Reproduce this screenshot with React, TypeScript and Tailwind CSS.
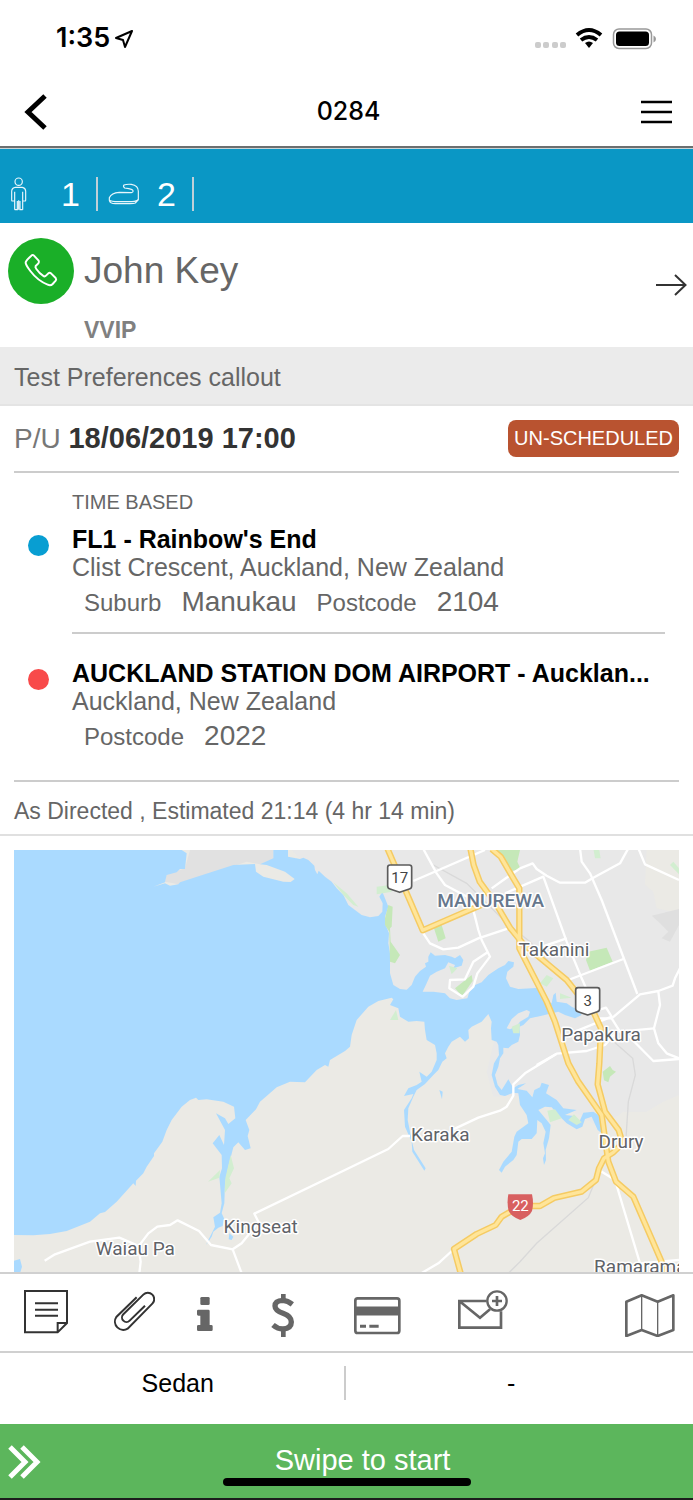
import type { ReactNode } from "react";

const placeLabels = [
  { name: "Takanini", x: 1662, y: 333 },
  { name: "Papakura", x: 1803, y: 588 },
  { name: "Karaka", x: 1321, y: 887 },
  { name: "Drury", x: 1863, y: 908 },
  { name: "Kingseat", x: 782, y: 1165 },
  { name: "Waiau Pa", x: 406, y: 1230 },
  { name: "Ramarama", x: 1921, y: 1285 },
];

const highways = [
  // route 17
  "M1162 10 L1268 256 L1455 175",
  // great south road
  "M1411 10 L1421 60 L1439 110 L1490 180 L1530 248 L1568 295 L1640 355 L1700 405 L1740 455 L1780 500 L1803 550 L1798 655 L1793 718 L1815 800 L1856 855 L1868 895 L1840 922 L1812 940 L1797 970 L1788 1005 L1745 1040 L1662 1059 L1620 1083 L1560 1083 L1505 1115 L1487 1140 L1430 1167 L1362 1212 L1382 1285",
  // southern motorway
  "M1475 12 L1502 35 L1540 100 L1558 130 L1558 310 L1640 470 L1665 530 L1705 655 L1735 710 L1805 810 L1815 880 L1825 950 L1848 1010 L1900 1055 L2000 1285",
];

const minorRoads = [
  "M1270 12 L1310 85 L1335 120 L1410 160 L1425 215 L1435 255 L1445 285 L1470 335 L1432 385 L1420 425 L1388 455 L1348 430 L1350 405 L1395 403 L1420 350 L1465 320",
  "M1240 108 L1455 15",
  "M1475 130 L1510 105 L1560 70 L1598 55 L1610 72 L1640 92 L1680 113 L1755 113 L1780 98 L1860 55 L1885 10",
  "M1740 10 L1745 50 L1770 85 L1805 165 L1912 447",
  "M1915 10 L1935 58 L2037 105",
  "M1515 145 L1630 95 L1700 290 L1745 400 L1785 490",
  "M1268 262 L1290 295 L1330 313 L1375 308 L1435 280 L1525 250",
  "M1565 325 L1700 280",
  "M1705 405 L1870 342",
  "M1795 520 L1835 520 L1920 448 L1975 438 L2018 422 L2025 400 L2040 370",
  "M1975 440 L1980 480 L1962 550 L1975 595 L2000 625 L2037 640",
  "M1835 520 L1860 560 L1962 550",
  "M1610 660 L1670 626 L1760 618 L1815 600 L1850 560",
  "M1725 560 L1835 515 L1818 488 L1780 500",
  "M1868 555 L1960 648 L2037 642",
  "M1670 626 L1640 645 L1575 685 L1540 718 L1540 752 L1520 785 L1500 797 L1435 818 L1360 853 M1230 873 L1208 873 L1165 912 L1035 975 L763 1106 L775 1130 L745 1170 L725 1195 L698 1213 L633 1200 L597 1158 L533 1126 L510 1140 L472 1145 L445 1165 L415 1205 L422 1250 L418 1285",
  "M134 1247 L165 1228 L270 1190 L358 1178 L410 1200",
  "M698 1213 L725 1285",
  "M1362 1212 L1315 1255 L1255 1290",
  "M1797 975 L1845 1005 L1920 1255 L2037 1245",
];

const parks = [
  "M1475 15 L1560 15 L1552 50 L1562 72 L1535 78 Z",
  "M1165 180 L1178 185 L1175 245 L1170 250 L1172 290 L1200 330 L1185 355 L1170 350 L1168 260 L1155 240 L1155 220 Z",
  "M1302 250 L1325 240 L1337 280 L1315 290 Z",
  "M1365 430 L1415 390 L1418 408 L1392 445 L1385 452 Z",
  "M1765 320 L1820 308 L1838 350 L1770 377 L1758 345 Z",
  "M1808 680 L1830 663 L1838 675 L1848 680 L1830 695 L1825 712 L1812 706 Z",
];

const paleParks = [
  "M1000 112 L1040 145 L1075 185 L1060 180 L1030 150 Z",
  "M1130 125 L1170 120 L1175 140 L1130 148 Z",
  "M1188 495 L1195 525 L1170 525 Z",
  "M1620 415 L1640 390 L1660 400 L1640 425 Z",
  "M1680 445 L1715 458 L1680 462 Z",
  "M1347 362 L1372 370 L1355 388 Z",
  "M1535 545 L1560 535 L1558 565 L1540 565 Z",
  "M1780 10 L1797 10 L1802 40 L1785 40 Z",
  "M2010 60 L2020 50 L2037 70 L2037 88 Z",
  "M1642 797 L1665 793 L1685 820 L1650 832 Z",
  "M1705 825 L1722 808 L1745 832 L1730 840 Z",
  "M692 930 L702 970 L688 1000 L695 1015 L674 1045 L676 1000 Z",
  "M624 1010 L660 975 L658 998 Z",
];

const waterPath =
  "M42 15 L545 15 L560 25 L555 72 L540 72 L530 82 L500 90 L495 112 L460 125 L495 115 L510 122 L535 118 L540 112 L700 60 L765 57 L768 80 L790 95 L850 110 L872 111 L884 102 L855 80 L800 60 L780 58 L820 40 L820 15 " +
  "L864 15 L864 35 L900 42 L910 38 L925 45 L943 62 L945 75 L952 88 L956 77 L975 95 L995 110 L1010 130 L1030 150 L1045 180 L1065 195 L1085 210 L1110 217 L1135 213 L1147 200 L1148 175 L1138 155 L1147 140 L1157 165 L1165 185 L1155 215 L1155 235 L1167 265 L1165 295 L1170 325 L1170 385 L1180 420 L1200 432 " +
  "L1220 434 L1235 420 L1245 395 L1260 378 L1278 365 L1275 355 L1285 350 L1285 335 L1292 322 L1305 332 L1335 330 L1355 335 L1365 340 L1380 330 L1390 345 L1385 362 L1360 370 L1365 360 L1345 352 L1335 370 L1310 380 L1290 392 L1280 415 L1268 440 L1300 440 L1335 445 L1350 460 L1370 465 L1402 460 L1410 435 L1420 422 L1445 412 L1465 390 L1495 370 L1515 360 L1525 348 L1542 352 L1540 365 L1522 380 L1518 400 L1530 425 L1555 432 L1595 430 L1622 428 " +
  "L1645 470 L1655 475 L1660 450 L1667 443 L1670 470 L1700 475 L1715 485 L1735 495 L1745 510 L1725 520 L1695 510 L1675 500 L1655 505 L1625 512 L1590 520 L1570 540 L1558 545 L1560 570 L1555 590 L1535 600 L1525 610 L1510 608 L1510 625 L1500 640 L1495 665 " +
  "L1485 690 L1493 720 L1505 735 L1525 703 L1540 730 L1555 720 L1578 715 L1552 732 L1580 737 L1597 757 L1603 735 L1620 727 L1625 713 L1647 720 L1638 745 L1670 765 L1690 790 L1730 795 L1695 810 L1722 813 L1738 830 L1750 803 L1780 800 L1795 810 L1810 840 L1812 870 L1793 855 L1775 815 L1755 822 L1747 845 L1730 853 L1700 835 L1675 810 L1655 787 L1635 785 L1615 795 L1640 825 L1652 840 L1647 880 L1637 915 L1638 945 L1632 960 L1629 940 L1635 925 L1630 895 L1637 860 L1625 835 L1612 825 L1610 865 L1595 882 L1565 882 L1555 890 L1550 930 L1540 945 L1515 965 L1505 983 L1497 975 L1510 950 L1535 920 L1543 875 L1550 860 L1585 835 L1580 810 L1560 780 L1555 745 L1540 743 L1515 753 L1500 750 L1485 725 L1475 690 L1482 655 " +
  "L1497 630 L1495 600 L1490 590 L1475 585 L1473 550 L1475 530 L1465 507 L1445 530 L1415 545 L1405 555 L1407 580 L1395 590 L1380 575 L1355 590 L1345 605 L1335 625 L1340 640 L1327 650 L1315 675 L1300 690 L1275 717 L1250 735 L1240 755 L1225 790 L1223 825 L1235 885 L1242 915 L1277 970 L1273 977 L1237 920 L1235 890 L1215 845 L1212 795 L1235 760 L1240 747 L1212 753 L1225 730 L1250 720 L1265 710 L1258 680 L1280 695 L1295 680 L1310 645 " +
  "L1310 625 L1305 600 L1280 585 L1275 555 L1273 530 L1250 528 L1225 530 L1200 515 L1195 490 L1170 480 L1180 463 L1175 458 L1135 468 L1105 485 L1070 525 L1055 570 L1050 605 L1035 618 L990 645 L985 665 L975 660 L950 675 L915 712 L870 710 L830 727 L800 753 L780 770 L768 793 L737 825 L748 855 L743 873 L752 910 L735 915 L715 892 L700 907 L685 965 L675 1015 L673 1075 L665 1105 L672 1120 L668 1143 L655 1148 L640 1160 L635 1175 L618 1200 L625 1185 L645 1145 L640 1117 L660 1103 L665 1075 L658 995 L666 970 L665 930 L638 895 L658 870 L672 900 L675 855 L648 805 L675 820 L685 837 L706 820 L702 785 L670 770 L620 763 L595 765 L588 758 L570 765 L545 785 L515 825 L500 855 L487 890 L462 925 L462 933 L440 965 L430 985 L408 1007 L407 1023 L400 1015 L350 1070 L315 1101 L300 1105 L270 1130 L200 1158 L150 1167 L100 1171 L42 1170 Z";

const TripMap = () => (
  <svg
    className="block w-full h-[422px]"
    viewBox="42 15 1995 1266"
    preserveAspectRatio="xMidYMid slice"
    fontFamily="Roboto, sans-serif"
    textAnchor="middle"
    role="img"
    aria-label="Trip map"
  >
    <rect x="-2000" y="-500" width="6000" height="2500" fill="#ebeae5" />
    <path
      d="M540 0 H2050 V745 L1990 770 L1940 800 L1870 800 L1800 850 L1740 810 L1600 750 L1480 755 L1460 680 L1500 520 L1140 450 L1100 250 L860 0 Z"
      fill="#e8e8e8"
    />
    <path d="M495 110 L500 88 L555 70 L570 15 H820 V42 L780 58 L740 50 L535 118 Z" fill="#e1e1e1" />
    <path d="M1940 10 H2037 V205 L1970 190 L1960 140 L1935 120 Z" fill="#ebeae5" />
    <path d="M1955 212 L2037 192 V240 L2010 290 L1985 280 L2005 260 L1980 235 Z" fill="#dfdfdf" />
    <path d={waterPath} fill="#aadaff" />
    <path d="M1520 550 L1535 522 L1555 505 L1580 495 L1590 500 L1585 515 L1560 530 L1550 543 L1530 553 Z" fill="#e8e8e8" />
    <path d="M42 1247 L60 1242 L66 1265 L60 1285 H42 Z M688 1165 L700 1175 L695 1185 L686 1183 Z M1318 735 L1328 740 L1326 763 Z" fill="#aadaff" />
    {parks.map((d) => (
      <path key={d} d={d} fill="#c5e8b8" />
    ))}
    {paleParks.map((d) => (
      <path key={d} d={d} fill="#d2eed0" />
    ))}
    <path
      d="M1300 60 L1400 115 L1520 235 L1590 290 L1740 450 L1830 580 L1898 640 L1906 690 L1885 770 L1878 880 L1805 960 L1765 1058 L1610 1195 L1560 1250 L1525 1285"
      fill="none"
      stroke="#d9d9d9"
      strokeWidth="4"
    />
    <g fill="none" stroke="#ffffff" strokeWidth="7" strokeLinejoin="round">
      {minorRoads.map((d) => (
        <path key={d} d={d} />
      ))}
    </g>
    <g fill="none" stroke="#f5cb63" strokeWidth="19" strokeLinejoin="round">
      {highways.map((d) => (
        <path key={d} d={d} />
      ))}
    </g>
    <g fill="none" stroke="#ffe599" strokeWidth="10" strokeLinejoin="round">
      {highways.map((d) => (
        <path key={d} d={d} />
      ))}
    </g>

    <g fill="#ffffff" stroke="#5b5b5b" strokeWidth="5" strokeLinejoin="round">
      <path d="M1170 60 H1228 Q1235 60 1235 67 V123 Q1235 130 1228 132 L1199 142 L1170 132 Q1163 130 1163 123 V67 Q1163 60 1170 60 Z" />
      <path d="M1734 428 H1792 Q1799 428 1799 435 V491 Q1799 498 1792 500 L1763 510 L1734 500 Q1727 498 1727 491 V435 Q1727 428 1734 428 Z" />
    </g>
    <path d="M1525 1048 H1596 Q1602 1075 1596 1098 Q1588 1115 1561 1125 Q1534 1115 1526 1098 Q1520 1075 1525 1048 Z" fill="#d86060" />
    <g fontSize="45">
      <text x="1199" y="115" fill="#444444">17</text>
      <text x="1763" y="484" fill="#444444">3</text>
      <text x="1561" y="1097" fill="#ffffff">22</text>
    </g>

    <g fontSize="57" stroke="#ffffff" strokeWidth="9" strokeLinejoin="round" paintOrder="stroke">
      <text x="1472" y="185" fontWeight="500" fill="#66778c">
        MANUREWA
      </text>
      {placeLabels.map((place) => (
        <text key={place.name} x={place.x} y={place.y} fill="#5f6368">
          {place.name}
        </text>
      ))}
    </g>
  </svg>
);

const StatusBar = () => (
  <div className="flex h-[77px] items-center justify-between pl-14 pr-9">
    <div className="flex items-center gap-1 font-['Inter',sans-serif] text-[27px] font-semibold">
      <span>1:35</span>
      <svg className="h-5 w-5" viewBox="0 0 20 20" fill="none" stroke="#000" strokeWidth="2" strokeLinejoin="round">
        <path d="M18 2 L2 9 L9 11 L11 18 Z" />
      </svg>
    </div>
    <svg className="h-6 w-[122px]" viewBox="0 0 122 24">
      <g fill="#cccccc">
        <rect x="0" y="15" width="6" height="6" rx="2" />
        <rect x="8" y="15" width="6" height="6" rx="2" />
        <rect x="17" y="15" width="6" height="6" rx="2" />
        <rect x="25" y="15" width="6" height="6" rx="2" />
      </g>
      <g fill="none" stroke="#000" strokeWidth="4">
        <path d="M42 8 Q54 -2 66 8" />
        <path d="M46 13 Q54 7 62 13" />
      </g>
      <path d="M50 16 Q54 13 58 16 L54 21 Z" />
      <rect x="78.5" y="2" width="38" height="19.5" rx="5.5" fill="none" stroke="#999" strokeWidth="1.5" />
      <rect x="81" y="4.5" width="33" height="14.5" rx="3.5" />
      <path d="M118.5 8.5 Q121 9.5 121 12 Q121 14.5 118.5 15.5 Z" fill="#999" />
    </svg>
  </div>
);

const TitleBar = () => (
  <header className="flex h-[71px] items-center justify-between border-b-2 border-[#6b6f70] pl-6 pr-5">
    <button aria-label="Back">
      <svg className="h-9 w-8" viewBox="0 0 32 36" fill="none" stroke="#000" strokeWidth="5">
        <path d="M21 2 L4 18 L21 34" />
      </svg>
    </button>
    <h1 className="font-['Inter',sans-serif] text-[25px] font-medium">0284</h1>
    <button aria-label="Menu">
      <svg className="h-6 w-8" viewBox="0 0 32 24" fill="none" stroke="#000" strokeWidth="2.5">
        <path d="M0 2 H31 M0 12 H31 M0 22 H31" />
      </svg>
    </button>
  </header>
);

const Counts = () => (
  <div className="flex items-center border-t border-[#c9d4d6] bg-[#0a97c5] pt-7 pb-3 text-[34px] leading-[34px] text-white">
    <svg className="ml-2.5 h-[34px] w-[18px]" viewBox="0 0 54 102" fill="none" stroke="#e8f6fc" strokeWidth="3.5">
      <circle cx="26" cy="14" r="11" />
      <path d="M14 98 V44 M14 72 H6 Q5 72 5 68 V42 Q6 32 16 31 H37 Q46 32 47 42 V68 Q47 72 46 72 H38 M38 98 V44 M26 98 V70 M14 98 H22 V72 M38 98 H30 V72" />
    </svg>
    <span className="ml-[33px]">1</span>
    <span className="ml-4 h-[34px] w-0.5 bg-[#bfd0d8]" />
    <svg className="ml-2.5 h-[34px] w-8" viewBox="0 0 96 102" fill="none" stroke="#e8f6fc" strokeWidth="3.5">
      <path d="M48 24 Q56 21 70 22 Q91 25 91 43 V68 L82 78 Q78 80 66 80 H22 Q6 80 4 70 V62 Q10 48 34 46 L70 47 Q76 46 75 41 Q74 37 62 35 L50 33 Q44 28 48 24 Z M3 69 Q10 74 30 74 H72 Q88 73 91 66" />
    </svg>
    <span className="ml-[17px]">2</span>
    <span className="ml-4 h-[34px] w-0.5 bg-[#bfd0d8]" />
  </div>
);

const Passenger = () => (
  <div className="flex h-[124px] items-center justify-between pl-2 pr-1.5">
    <div className="flex items-start gap-2.5 pt-3">
      <button className="flex size-[66px] items-center justify-center rounded-full bg-[#1aaf28]" aria-label="Call">
        <svg className="h-9 w-9" viewBox="0 0 108 108" fill="none" stroke="#fff" strokeWidth="6" strokeLinejoin="round">
          <path d="M25 8 Q29 4 33 8 L47 23 Q49 27 46 31 L38 39 Q36 43 40 48 Q50 62 60 68 Q65 72 69 68 L76 61 Q80 58 84 61 L98 75 Q101 79 98 83 L89 93 Q83 99 74 95 Q44 83 22 54 Q7 34 8 28 Q10 21 25 8 Z" />
        </svg>
      </button>
      <div>
        <h2 className="text-[37px] leading-[66px] text-[#666]">John Key</h2>
        <p className="pt-3 text-[23px] leading-7 font-bold text-[#808080]">VVIP</p>
      </div>
    </div>
    <button aria-label="Open passenger">
      <svg className="h-6 w-8" viewBox="0 0 32 24" fill="none" stroke="#333" strokeWidth="2">
        <path d="M1 12 H31 M20 2 L30.5 12 L20 22" />
      </svg>
    </button>
  </div>
);

type StopProps = {
  dot: string;
  kind?: string;
  name: string;
  address: string;
  details: { label: string; value: string }[];
  className: string;
};

const Stop = ({ dot, kind, name, address, details, className }: StopProps) => (
  <div className={className}>
    {kind && <p className="mb-2 ml-11 text-[20px] leading-[30px] text-[#666]">{kind}</p>}
    <div className="flex items-start">
      <span className={`mt-2.5 mr-[23px] size-[21px] shrink-0 rounded-full ${dot}`} />
      <div className="min-w-0 flex-1">
        <h3 className="truncate text-[25px] leading-7 font-bold">{name}</h3>
        <p className="text-[25px] leading-7 text-[#666]">{address}</p>
        <dl className="flex h-10 items-baseline pl-3 leading-[42px] text-[#666]">
          {details.map((detail) => (
            <div key={detail.label} className="mr-5 flex items-baseline gap-5">
              <dt className="text-[24px]">{detail.label}</dt>
              <dd className="text-[28px]">{detail.value}</dd>
            </div>
          ))}
        </dl>
      </div>
    </div>
  </div>
);

type ToolProps = { label: string; className: string; viewBox: string; children: ReactNode };

const Tool = ({ label, className, viewBox, children }: ToolProps) => (
  <button className="flex items-center justify-center last:justify-end last:pr-[18px]" aria-label={label}>
    <svg className={`h-[49px] ${className}`} viewBox={viewBox} fill="none" stroke="#666" strokeWidth="8">
      {children}
    </svg>
  </button>
);

const Toolbar = () => (
  <div className="grid h-[81px] grid-cols-[92fr_84fr_58fr_98fr_90fr_122fr_149fr] border-y-2 border-[#d0d0d0]">
    <Tool label="Notes" className="w-11" viewBox="0 0 132 147">
      <path
        d="M3 9 H129 V105 L101 133 H3 Z M129 105 H101 V133 M33 46 H102 M33 65 H102 M33 83 H102"
        stroke="#333"
        strokeWidth="6"
      />
    </Tool>
    <Tool label="Attachments" className="w-[42px]" viewBox="0 0 126 147">
      <path
        d="M71 28 L10 87 A25 25 0 0 0 44 122 L118 47 A19 19 0 0 0 91 20 L31 79 A13 13 0 0 0 50 98 L96 53"
        stroke="#333"
        strokeWidth="6"
      />
    </Tool>
    <Tool label="Info" className="w-4" viewBox="0 0 48 147">
      <g fill="#666" stroke="none">
        <rect x="10" y="27" width="28" height="24" rx="4" />
        <path d="M4 65 H34 Q38 65 38 69 V111 H43 Q47 111 47 115 V125 Q47 129 43 129 H4 Q0 129 0 125 V115 Q0 111 4 111 H10 V83 H4 Q0 83 0 79 V69 Q0 65 4 65 Z" />
      </g>
    </Tool>
    <Tool label="Price" className="w-6" viewBox="0 0 72 147">
      <path d="M64 49 Q50 38 36 37 Q12 38 12 54 Q12 67 36 76 Q61 85 61 102 Q61 121 36 123 Q20 123 6 111" strokeWidth="16" />
      <path d="M37 18 V38 M37 120 V147" strokeWidth="14" />
    </Tool>
    <Tool label="Payment" className="w-12" viewBox="0 0 144 147">
      <rect x="7" y="31" width="132" height="104" rx="7" />
      <path d="M4 69 H140" strokeWidth="27" />
      <path d="M21 115 H39 M49 115 H77" strokeWidth="9" />
    </Tool>
    <Tool label="Message" className="w-[50px]" viewBox="0 0 150 147">
      <path d="M86 39 H4 V119 H129 V70 M4 39 L66 89 L96 64" />
      <circle cx="117" cy="39" r="29" strokeWidth="7" />
      <path d="M117 24 V54 M102 39 H132" />
    </Tool>
    <Tool label="Map" className="w-[50px]" viewBox="0 0 150 147">
      <path d="M4 41 L50 22 L98 41 L145 22 V126 L98 144 L50 126 L4 144 Z" strokeLinejoin="round" />
      <path d="M50 22 V126 M98 41 V144" strokeWidth="4" />
    </Tool>
  </div>
);

export default function App() {
  return (
    <div className="bg-white font-['Liberation_Sans',Arial,sans-serif] text-black">
      <StatusBar />
      <TitleBar />
      <Counts />
      <Passenger />

      <p className="h-[59px] border-b-2 border-[#e4e4e4] bg-[#ebebeb] pl-3.5 text-[25px] leading-[60px] text-[#666]">
        Test Preferences callout
      </p>

      <main>
        <div className="mx-3.5 flex h-[67px] items-center justify-between border-b-2 border-[#cccccc]">
          <p className="text-[28px] text-[#333]">
            <span className="text-[#777]">P/U</span> <strong className="text-[29px]">18/06/2019 17:00</strong>
          </p>
          <span className="rounded-lg bg-[#b95330] px-1.5 text-[20px] leading-[37px] text-white">UN-SCHEDULED</span>
        </div>

        <div className="mx-3.5 border-b-2 border-[#cccccc] px-3.5">
          <Stop
            className="-ml-px pt-3.5 pb-[11px] pl-px"
            dot="bg-[#089ed2]"
            kind="TIME BASED"
            name="FL1 - Rainbow's End"
            address="Clist Crescent, Auckland, New Zealand"
            details={[
              { label: "Suburb", value: "Manukau" },
              { label: "Postcode", value: "2104" },
            ]}
          />
          <hr className="ml-11 border-t-2 border-[#cccccc]" />
          <Stop
            className="py-[25px]"
            dot="bg-[#f84a4a]"
            name="AUCKLAND STATION DOM AIRPORT - Aucklan..."
            address="Auckland, New Zealand"
            details={[{ label: "Postcode", value: "2022" }]}
          />
        </div>

        <p className="h-[54px] border-b-2 border-[#e0e0e0] pl-3.5 text-[23px] leading-[58px] text-[#666]">
          As Directed , Estimated 21:14 (4 hr 14 min)
        </p>
        <div className="px-3.5 pt-3.5">
          <TripMap />
        </div>
      </main>

      <Toolbar />

      <div className="flex h-[71px] items-start pt-[13px] text-center text-[25px] leading-[34px]">
        <span className="flex-1 border-r-2 border-[#cccccc] pl-3">Sedan</span>
        <span className="flex-1 pr-4">-</span>
      </div>

      <footer className="relative border-b-2 border-[#1d1d1d] bg-[#5cb65c] text-white">
        <button className="flex h-[74px] w-full items-center pl-2">
          <svg className="h-9 w-9" viewBox="0 0 36 36" fill="none" stroke="#fff" strokeWidth="5">
            <path d="M2 4 L17 19 L2 34 M14 4 L29 19 L14 34" />
          </svg>
          <span className="flex-1 pr-3 text-[29px]">Swipe to start</span>
        </button>
        <span className="absolute bottom-3 left-1/2 h-2 w-[248px] -translate-x-1/2 rounded-full bg-black" />
      </footer>
    </div>
  );
}
